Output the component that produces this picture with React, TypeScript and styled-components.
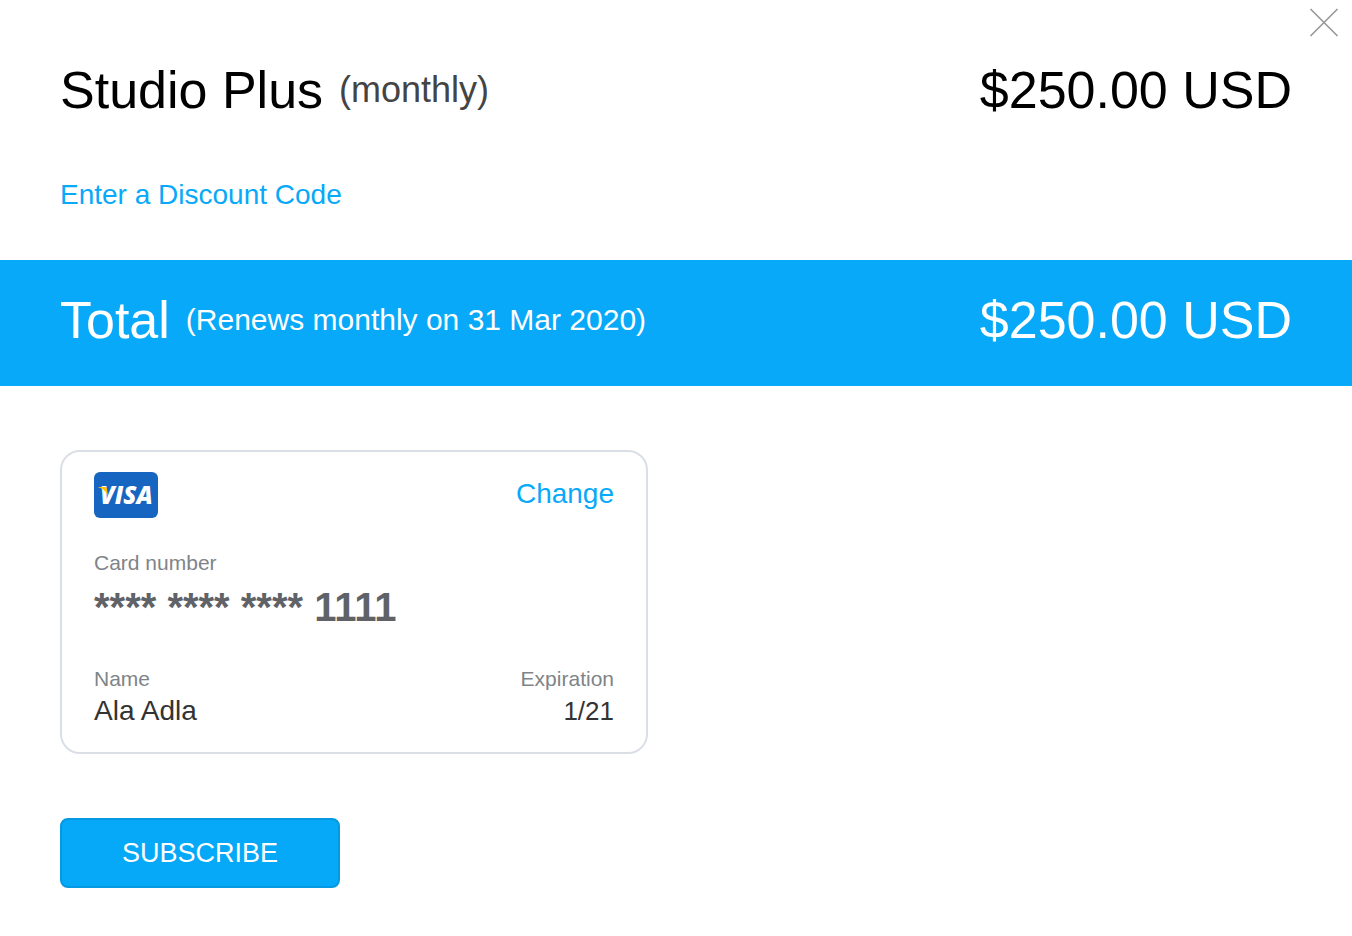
import React from "react";
import styled, { createGlobalStyle } from "styled-components";

const GlobalStyle = createGlobalStyle`
  * { box-sizing: border-box; }
  body {
    margin: 0;
    background: #fff;
    color: #000;
    font-family: "Liberation Sans", Helvetica, Arial, sans-serif;
  }
  h1, h2, p, dl, dt, dd { margin: 0; font-weight: 400; }
`;

const Dialog = styled.main`
  position: relative;
  padding-bottom: 48px;
`;

const CloseButton = styled.button`
  position: absolute;
  top: 8px;
  right: 13px;
  display: flex;
  padding: 0;
  border: 0;
  background: none;
  cursor: pointer;
`;

const PlanSection = styled.header`
  display: flex;
  flex-direction: column;
  align-items: stretch;
  gap: 58px;
  padding: 60px 60px 48px;
`;

const TotalBand = styled.section`
  padding: 30px 60px 36px;
  background: #07a9f8;
  color: #fff;
`;

const PriceRow = styled.div`
  display: flex;
  justify-content: space-between;
  align-items: center;
  gap: 16px;
  font-size: 52px;
  line-height: 60px;
`;

const PriceLabel = styled.div`
  display: flex;
  align-items: center;
  gap: 16px;
`;

const Heading = styled.h1`
  font-size: 52px;
`;

const Note = styled.p<{ $size: number; $color?: string }>`
  font-size: ${(p) => p.$size}px;
  color: ${(p) => p.$color ?? "inherit"};
`;

const Amount = styled.p`
  white-space: nowrap;
`;

const TextLink = styled.a`
  align-self: flex-start;
  font-size: 28px;
  line-height: 34px;
  color: #07a9f8;
  text-decoration: none;
`;

const PaymentSection = styled.section`
  display: flex;
  flex-direction: column;
  align-items: flex-start;
  gap: 64px;
  padding: 64px 60px 0;
`;

const CreditCard = styled.div`
  display: flex;
  flex-direction: column;
  gap: 33px;
  width: 100%;
  max-width: 588px;
  padding: 20px 32px 25px;
  border: 2px solid #dadfe6;
  border-radius: 20px;
`;

const CardTop = styled.div`
  display: flex;
  justify-content: space-between;
  align-items: flex-start;

  ${TextLink} {
    line-height: 44px;
  }
`;

const Details = styled.dl`
  display: flex;
  flex-wrap: wrap;
  justify-content: space-between;
  row-gap: 32px;
`;

const Field = styled.div<{ $wide?: boolean; $end?: boolean }>`
  display: flex;
  flex-direction: column;
  gap: 4px;
  flex-basis: ${(p) => (p.$wide ? "100%" : "auto")};
  text-align: ${(p) => (p.$end ? "right" : "left")};
`;

const FieldLabel = styled.dt`
  font-size: 21px;
  line-height: 24px;
  color: #808488;
`;

const FieldValue = styled.dd<{ $size: number }>`
  font-size: ${(p) => p.$size}px;
  line-height: 32px;
  color: #333;
`;

const CardNumber = styled.dd`
  font-size: 40px;
  font-weight: 700;
  line-height: 56px;
  color: #5f6368;
`;

const SubscribeButton = styled.button`
  width: 280px;
  height: 70px;
  padding: 0;
  border: 2px solid #0499e1;
  border-radius: 8px;
  background: #05a9f7;
  color: #fff;
  font-family: inherit;
  font-size: 27px;
  line-height: 32px;
  cursor: pointer;
`;

const VisaLogo = () => (
  <svg width="64" height="46" viewBox="0 0 64 46" role="img" aria-label="Visa">
    <rect width="64" height="46" rx="6" fill="#1665c1" />
    <text
      x="6"
      y="32"
      fill="#fff"
      fontFamily="'Open Sans', 'Noto Sans', sans-serif"
      fontSize="24"
      fontStyle="italic"
      fontWeight="800"
    >
      VISA
    </text>
    <path d="M4.5 15h6c1.5 0 2.200.6 2.500 1.800l.9 7.400c-1.400-4.300-4.600-7.600-9.400-8.700z" fill="#ffc107" />
  </svg>
);

export default function App() {
  return (
    <>
      <GlobalStyle />
      <Dialog>
        <CloseButton type="button" aria-label="Close">
          <svg width="30" height="30" viewBox="0 0 30 30" fill="none" stroke="#999" strokeWidth="1.7">
            <path d="M1.500 1L28.500 28M28.500 1L1.500 28" />
          </svg>
        </CloseButton>

        <PlanSection>
          <PriceRow>
            <PriceLabel>
              <Heading>Studio Plus</Heading>
              <Note $size={36} $color="#444">(monthly)</Note>
            </PriceLabel>
            <Amount>$250.00 USD</Amount>
          </PriceRow>
          <TextLink href="#discount">Enter a Discount Code</TextLink>
        </PlanSection>

        <TotalBand>
          <PriceRow>
            <PriceLabel>
              <Heading as="h2">Total</Heading>
              <Note $size={30}>(Renews monthly on 31 Mar 2020)</Note>
            </PriceLabel>
            <Amount>$250.00 USD</Amount>
          </PriceRow>
        </TotalBand>

        <PaymentSection>
          <CreditCard>
            <CardTop>
              <VisaLogo />
              <TextLink href="#change">Change</TextLink>
            </CardTop>
            <Details>
              <Field $wide>
                <FieldLabel>Card number</FieldLabel>
                <CardNumber>**** **** **** 1111</CardNumber>
              </Field>
              <Field>
                <FieldLabel>Name</FieldLabel>
                <FieldValue $size={28}>Ala Adla</FieldValue>
              </Field>
              <Field $end>
                <FieldLabel>Expiration</FieldLabel>
                <FieldValue $size={26}>1/21</FieldValue>
              </Field>
            </Details>
          </CreditCard>
          <SubscribeButton type="button">SUBSCRIBE</SubscribeButton>
        </PaymentSection>
      </Dialog>
    </>
  );
}
